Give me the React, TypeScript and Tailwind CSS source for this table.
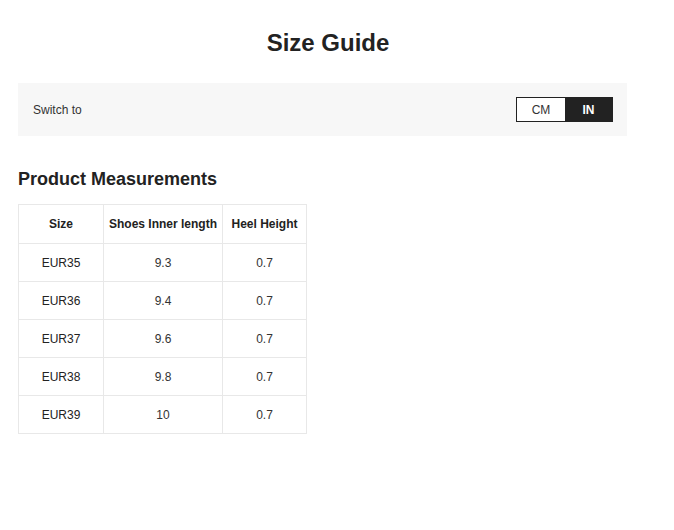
export default function App() {
  const rows = [
    ["EUR35", "9.3", "0.7"],
    ["EUR36", "9.4", "0.7"],
    ["EUR37", "9.6", "0.7"],
    ["EUR38", "9.8", "0.7"],
    ["EUR39", "10", "0.7"],
  ];
  return (
    <div className="w-[656px] bg-white text-[#222] pb-[97px]" style={{ fontFamily: '"Liberation Sans", Arial, sans-serif' }}>
      <h1 className="pt-[30px] text-center text-[24px] leading-[26px] font-bold">Size Guide</h1>
      <div className="ml-[18px] mt-[27px] flex h-[53px] w-[609px] items-center justify-between bg-[#f7f7f7] pl-[15px] pr-[14px]">
        <span className="text-[12px] text-[#333]">Switch to</span>
        <div className="flex h-[25px] border border-[#222]">
          <div className="flex w-[48px] items-center justify-center bg-white text-[12px] text-[#333]">CM</div>
          <div className="flex w-[47px] items-center justify-center bg-[#222] text-[12px] font-bold text-white">IN</div>
        </div>
      </div>
      <h2 className="ml-[18px] mt-[32px] text-[18px] leading-[22px] font-bold">Product Measurements</h2>
      <table className="ml-[18px] mt-[14px] border-collapse text-[12px]">
        <thead>
          <tr className="h-[39px]">
            <th className="w-[85px] border border-[#e8e8e8] font-bold">Size</th>
            <th className="w-[119px] border border-[#e8e8e8] font-bold">Shoes Inner length</th>
            <th className="w-[84px] border border-[#e8e8e8] font-bold">Heel Height</th>
          </tr>
        </thead>
        <tbody>
          {rows.map((r) => (
            <tr key={r[0]} className="h-[38px]">
              <td className="border border-[#e8e8e8] text-center">{r[0]}</td>
              <td className="border border-[#e8e8e8] text-center text-[#333]">{r[1]}</td>
              <td className="border border-[#e8e8e8] text-center text-[#333]">{r[2]}</td>
            </tr>
          ))}
        </tbody>
      </table>
    </div>
  );
}
